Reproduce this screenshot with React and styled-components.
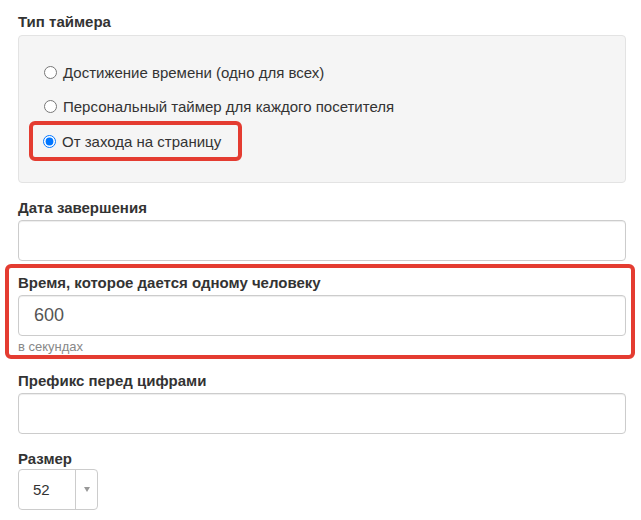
import React from 'react';
import styled, { createGlobalStyle } from 'styled-components';

const GlobalStyle = createGlobalStyle`
  body {
    margin: 0;
    background: #fff;
    font-family: "Liberation Sans", Arial, sans-serif;
    color: #333;
  }
`;

/**
 * Page wrapper
 */
const Page = styled.div`
  width: 608px;
  padding: 12px 0 0 18px;
`;

const FormGroup = styled.div`
  margin-bottom: ${props => props.gap ?? 15}px;
`;

const Label = styled.div`
  font-size: 15px;
  font-weight: bold;
  line-height: 20px;
  margin-bottom: ${props => props.tight ? 0 : 2}px;
`;

/**
 * Grey well around radio buttons
 */
const Well = styled.div`
  margin-top: 3px;
  background: #f5f5f5;
  border: 1px solid #e3e3e3;
  border-radius: 4px;
  padding: 19px 0 21px 0;
`;

const RadioRow = styled.label`
  display: flex;
  align-items: center;
  height: 34px;
  padding-left: 25px;
  font-size: 15px;
  color: #333;
`;

const Highlight = styled.div`
  display: inline-flex;
  align-items: center;
  margin: -2px 0 0 10px;
  height: 32px;
  padding: 0 17px 0 10px;
  border: 4px solid #e43c31;
  border-radius: 6px;
  font-size: 15px;
  color: #333;
`;

const Radio = styled.input.attrs({ type: 'radio' })`
  width: 13px;
  height: 13px;
  margin: 0 6px 0 0;
  accent-color: #0075ff;
`;

const Input = styled.div`
  box-sizing: border-box;
  height: 41px;
  border: 1px solid #ccc;
  border-radius: 4px;
  background: #fff;
  box-shadow: inset 0 1px 1px rgba(0, 0, 0, 0.075);
  padding: 0 15px;
  display: flex;
  align-items: center;
  font-size: 18px;
  color: #555;
`;

/**
 * Red frame around the time field
 */
const Frame = styled.div`
  box-sizing: border-box;
  margin: 3px 0 12px -13px;
  width: 630px;
  padding: 5px 5px 0 9px;
  border: 4px solid #e43c31;
  border-radius: 6px;
`;

const Help = styled.div`
  font-size: 13px;
  line-height: 17px;
  color: #888;
  margin-top: 2px;
`;

const Select = styled.div`
  box-sizing: border-box;
  width: 80px;
  height: 41px;
  border: 1px solid #ccc;
  border-radius: 4px;
  display: flex;
  font-size: 15px;
  color: #333;
`;

const SelectValue = styled.div`
  width: 57px;
  display: flex;
  align-items: center;
  padding-left: 14px;
  box-sizing: border-box;
  border-right: 1px solid #ccc;
`;

const SelectArrow = styled.div`
  flex: 1;
  display: flex;
  align-items: center;
  justify-content: center;
  &::after {
    content: '';
    border-left: 3px solid transparent;
    border-right: 3px solid transparent;
    border-top: 5px solid #999;
  }
`;

export default function App() {
  return (
    <>
      <GlobalStyle />
      <Page>
        <FormGroup gap={15}>
          <Label tight>Тип таймера</Label>
          <Well>
            <RadioRow><Radio name="t" />Достижение времени (одно для всех)</RadioRow>
            <RadioRow><Radio name="t" />Персональный таймер для каждого посетителя</RadioRow>
            <Highlight><Radio name="t" defaultChecked />От захода на страницу</Highlight>
          </Well>
        </FormGroup>
        <FormGroup gap={0}>
          <Label>Дата завершения</Label>
          <Input />
        </FormGroup>
        <Frame>
          <Label>Время, которое дается одному человеку</Label>
          <Input>600</Input>
          <Help>в секундах</Help>
        </Frame>
        <FormGroup gap={15}>
          <Label>Префикс перед цифрами</Label>
          <Input />
        </FormGroup>
        <FormGroup>
          <Label tight>Размер</Label>
          <Select>
            <SelectValue>52</SelectValue>
            <SelectArrow />
          </Select>
        </FormGroup>
      </Page>
    </>
  );
}
